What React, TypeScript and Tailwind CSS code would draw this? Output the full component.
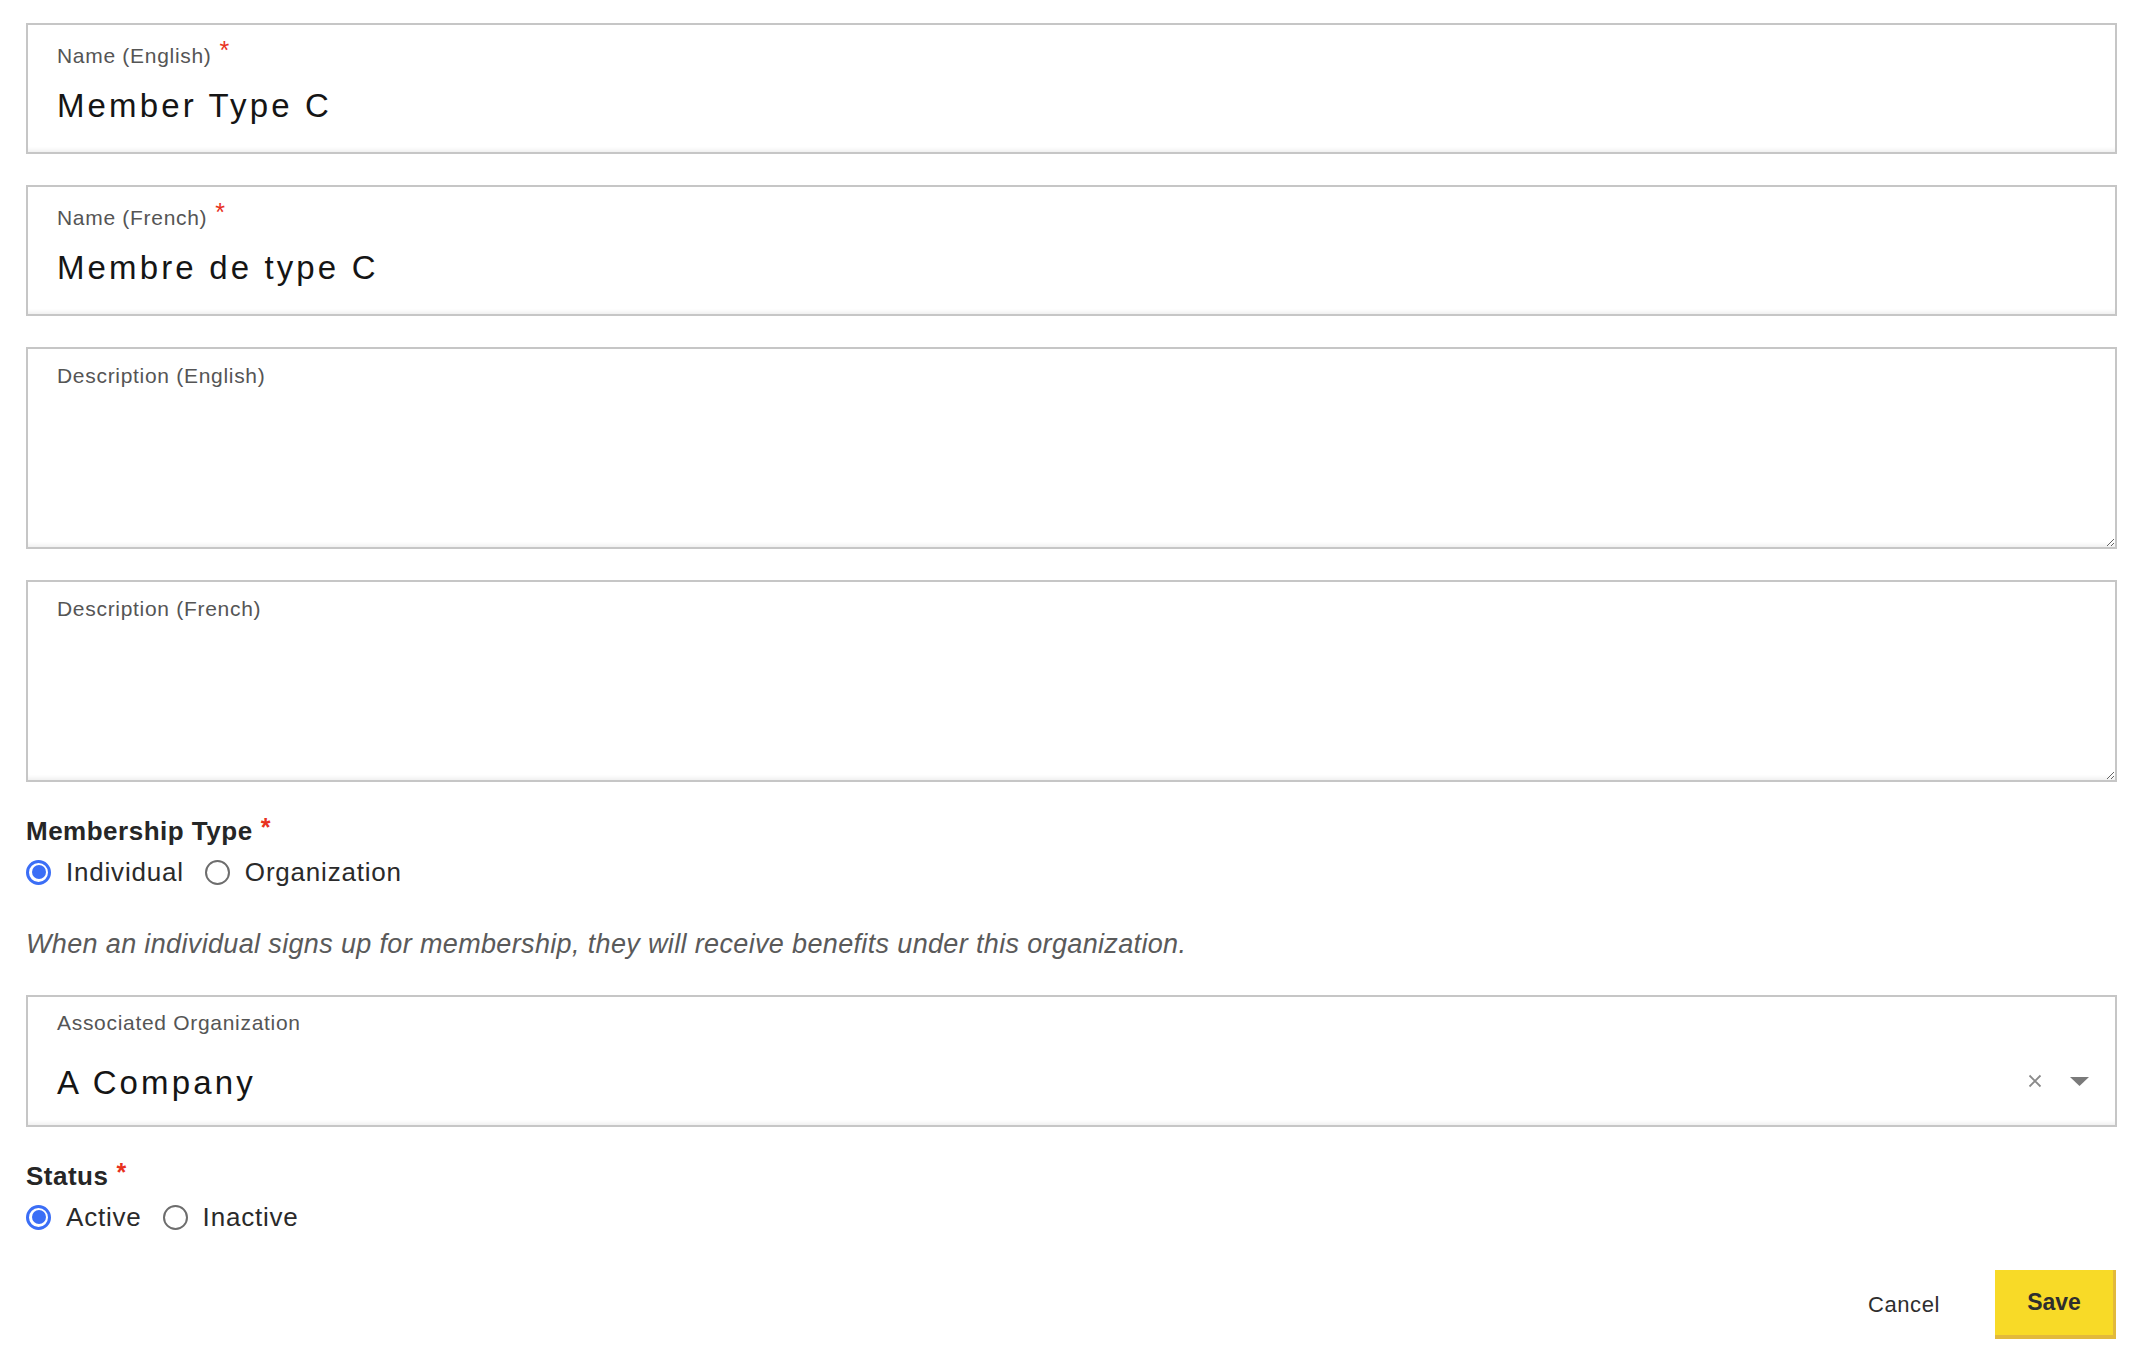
import { useState } from "react";

const font = { fontFamily: '"Liberation Sans", Arial, sans-serif' };

function Req() {
  return <span className="ml-[8px] align-top text-[25px] leading-none text-[#e8321e]">*</span>;
}

function TextField({ label, value, required }: { label: string; value: string; required?: boolean }) {
  return (
    <div className="box-border h-[131px] border-2 border-[#c6c6c6] bg-white px-[29px] pt-[13px] shadow-[inset_0_-5px_4px_-3px_rgba(0,0,0,0.07)]">
      <div className="text-[21px] leading-[36px] tracking-[0.7px] text-[#555]">
        {label}
        {required && <Req />}
      </div>
      <input
        className="mt-[11px] block w-full bg-transparent text-[33px] leading-[42px] tracking-[0.095em] text-[#151515] outline-none"
        defaultValue={value}
      />
    </div>
  );
}

function AreaField({ label }: { label: string }) {
  return (
    <div className="relative h-[202px]">
      <textarea className="box-border block h-full w-full resize-y border-2 border-[#c6c6c6] bg-white px-[29px] pt-[54px] text-[24px] outline-none shadow-[inset_0_-5px_4px_-3px_rgba(0,0,0,0.07)]" />
      <span className="pointer-events-none absolute left-[31px] top-[11px] text-[21px] leading-[36px] tracking-[0.7px] text-[#555]">
        {label}
      </span>
    </div>
  );
}

function Radio({ label, checked, onClick }: { label: string; checked: boolean; onClick: () => void }) {
  return (
    <button type="button" onClick={onClick} className="flex h-[32px] items-center gap-[15px]">
      {checked ? (
        <span className="flex h-[25px] w-[25px] items-center justify-center rounded-full border-[3px] border-[#3b6ef6]">
          <span className="h-[14px] w-[14px] rounded-full bg-[#3b6ef6]" />
        </span>
      ) : (
        <span className="h-[25px] w-[25px] rounded-full border-2 border-[#6d6d6d]" />
      )}
      <span className="text-[26px] tracking-[0.8px] text-[#2a2a2a]">{label}</span>
    </button>
  );
}

function RadioGroup({
  title,
  options,
  value,
  onChange,
}: {
  title: string;
  options: string[];
  value: string;
  onChange: (v: string) => void;
}) {
  return (
    <div>
      <div className="text-[26px] font-bold leading-[32px] tracking-[0.5px] text-[#262626]">
        {title}
        <Req />
      </div>
      <div className="mt-[9px] flex items-center gap-[21px]">
        {options.map((o) => (
          <Radio key={o} label={o} checked={value === o} onClick={() => onChange(o)} />
        ))}
      </div>
    </div>
  );
}

function SelectField({ label, value }: { label: string; value: string }) {
  return (
    <div className="box-border flex h-[132px] items-stretch border-2 border-[#c6c6c6] bg-white pl-[29px] pr-[26px] shadow-[inset_0_-5px_4px_-3px_rgba(0,0,0,0.07)]">
      <div className="flex-1 pt-[8px]">
        <div className="text-[21px] leading-[36px] tracking-[0.7px] text-[#555]">{label}</div>
        <div className="mt-[21px] text-[33px] leading-[42px] tracking-[0.095em] text-[#151515]">{value}</div>
      </div>
      <div className="flex items-center gap-[28px] pt-[40px]">
        <svg width="14" height="14" viewBox="0 0 14 14" fill="none" stroke="#8a8a8a" strokeWidth="1.8">
          <path d="M1.5 1.5l11 11M12.5 1.5l-11 11" />
        </svg>
        <svg width="19" height="9" viewBox="0 0 19 9">
          <path d="M0 0h19l-9.5 9z" fill="#7a7a7a" />
        </svg>
      </div>
    </div>
  );
}

export default function App() {
  const [type, setType] = useState("Individual");
  const [status, setStatus] = useState("Active");

  return (
    <div className="min-h-screen bg-white pl-[26px] pr-[23px] pt-[23px]" style={font}>
      <div className="flex flex-col gap-[31px]">
        <TextField label="Name (English)" value="Member Type C" required />
        <TextField label="Name (French)" value="Membre de type C" required />
        <AreaField label="Description (English)" />
        <AreaField label="Description (French)" />
      </div>

      <div className="mt-[33px]">
        <RadioGroup title="Membership Type" options={["Individual", "Organization"]} value={type} onChange={setType} />
      </div>

      <p className="mt-[40px] text-[27px] italic leading-[32px] tracking-[0.35px] text-[#5a5a5a]">
        When an individual signs up for membership, they will receive benefits under this organization.
      </p>

      <div className="mt-[35px]">
        <SelectField label="Associated Organization" value="A Company" />
      </div>

      <div className="mt-[33px]">
        <RadioGroup title="Status" options={["Active", "Inactive"]} value={status} onChange={setStatus} />
      </div>

      <div className="mt-[37px] flex items-center justify-end gap-[55px] pr-px">
        <button type="button" className="text-[22px] tracking-[0.6px] text-[#2e2e2e]">
          Cancel
        </button>
        <button
          type="button"
          className="box-border h-[69px] w-[121px] border-b-4 border-r-[3px] border-[#e2b93b] bg-[#f8da27] text-[23px] font-bold text-[#2e2e2e]"
        >
          Save
        </button>
      </div>
    </div>
  );
}
